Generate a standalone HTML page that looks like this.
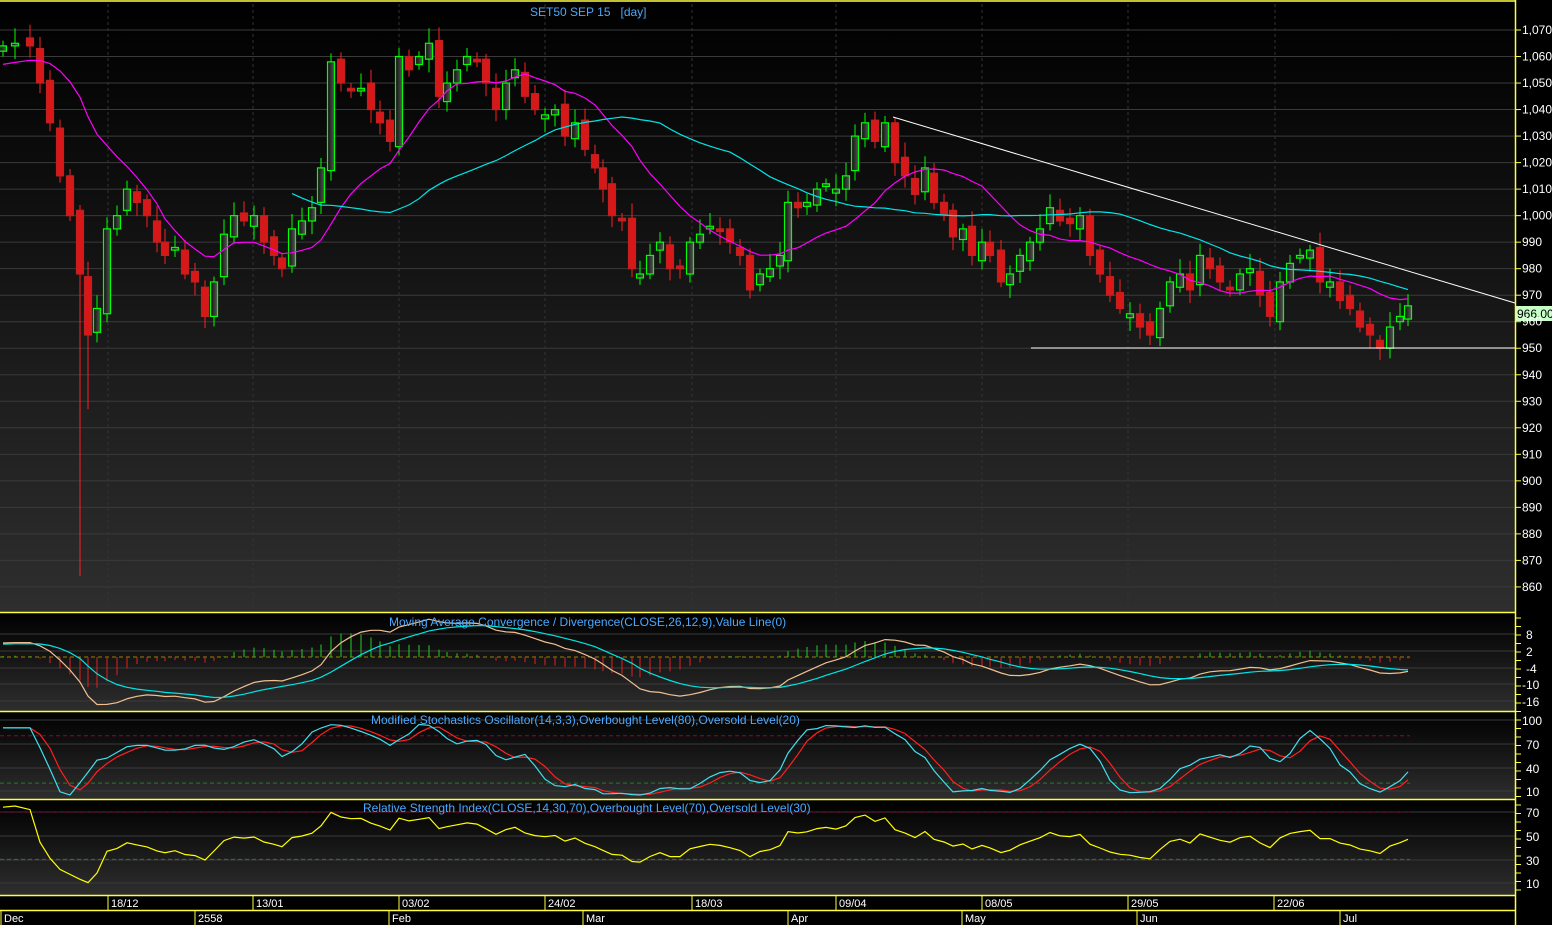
<!DOCTYPE html>
<html><head><meta charset="utf-8"><style>
html,body{margin:0;padding:0;background:#000;width:1552px;height:925px;overflow:hidden;font-family:"Liberation Sans",sans-serif}
svg{display:block}
</style></head><body>
<svg id="s" width="1552" height="925" xmlns="http://www.w3.org/2000/svg" font-family="Liberation Sans, sans-serif">
<defs>
<linearGradient id="g" x1="0" y1="0" x2="0" y2="1"><stop offset="0" stop-color="#000"/><stop offset="1" stop-color="#2e2e2e"/></linearGradient>
<linearGradient id="cg" x1="0" y1="0" x2="1" y2="0"><stop offset="0" stop-color="#111"/><stop offset="1" stop-color="#555"/></linearGradient>
</defs>
<rect x="0" y="0" width="1515" height="612" fill="url(#g)"/>
<rect x="0" y="613" width="1515" height="98" fill="url(#g)"/>
<rect x="0" y="712" width="1515" height="87" fill="url(#g)"/>
<rect x="0" y="800" width="1515" height="95" fill="url(#g)"/>
<g id="grid"></g>
<g id="plot"></g>
<g stroke="#ffff40" stroke-width="1.5" fill="none">
<line x1="0" y1="1" x2="1515" y2="1"/>
<line x1="0" y1="612.5" x2="1515" y2="612.5"/>
<line x1="0" y1="711.5" x2="1515" y2="711.5"/>
<line x1="0" y1="799.5" x2="1515" y2="799.5"/>
<line x1="0" y1="895.5" x2="1515" y2="895.5"/>
<line x1="0" y1="910.5" x2="1515" y2="910.5"/>
<line x1="1515.5" y1="0" x2="1515.5" y2="925"/>
</g>
<text x="530" y="16" fill="#4aa8ff" font-size="12" style="white-space:pre">SET50 SEP 15   [day]</text>
<text x="389" y="626" fill="#4aa8ff" font-size="12">Moving Average Convergence / Divergence(CLOSE,26,12,9),Value Line(0)</text>
<text x="371" y="724" fill="#4aa8ff" font-size="12">Modified Stochastics Oscillator(14,3,3),Overbought Level(80),Oversold Level(20)</text>
<text x="363" y="812" fill="#4aa8ff" font-size="12">Relative Strength Index(CLOSE,14,30,70),Overbought Level(70),Oversold Level(30)</text>
<g id="ax" fill="#fff" font-size="12"></g>
<g id="dt" fill="#fff" font-size="11"></g>
</svg>
<script>
var NS="http://www.w3.org/2000/svg";
function el(p,t,a,txt){var e=document.createElementNS(NS,t);for(var k in a)e.setAttribute(k,a[k]);if(txt!=null)e.textContent=txt;document.getElementById(p).appendChild(e);return e;}
var pts=[[3,1064],[15,1065],[30,1064],[40,1050],[50,1035],[60,1015],[70,1000],[80,978],[88,955],[97,965],[107,995],[117,1000],[127,1010],[137,1005],[147,1000],[157,990],[165,985],[175,988],[185,978],[195,975],[205,962],[214,975],[224,993],[234,1000],[244,998],[254,1000],[264,990],[274,985],[282,980],[292,995],[302,998],[312,1003],[321,1018],[331,1058],[341,1050],[351,1047],[361,1048],[371,1040],[380,1035],[390,1028],[399,1060],[409,1055],[419,1060],[429,1065],[439,1045],[447,1050],[457,1055],[467,1060],[477,1058],[486,1050],[496,1040],[506,1050],[515,1055],[525,1045],[535,1040],[545,1038],[555,1040],[565,1030],[575,1035],[585,1025],[595,1018],[603,1010],[612,1000],[622,998],[632,980],[640,978],[650,985],[660,990],[670,980],[680,980],[690,990],[700,993],[710,996],[720,994],[730,990],[740,985],[750,972],[760,978],[770,980],[780,985],[788,1005],[798,1003],[807,1005],[817,1010],[826,1012],[836,1010],[846,1015],[855,1030],[865,1035],[875,1028],[885,1035],[895,1020],[905,1015],[915,1008],[925,1018],[934,1005],[944,1000],[953,992],[963,995],[972,985],[982,990],[990,985],[1001,975],[1010,978],[1020,985],[1030,990],[1040,995],[1050,1003],[1060,998],[1070,997],[1080,1000],[1090,985],[1100,978],[1110,970],[1120,965],[1130,963],[1140,958],[1150,955],[1160,965],[1170,975],[1180,978],[1190,972],[1200,985],[1210,980],[1220,975],[1230,972],[1240,978],[1250,980],[1260,970],[1270,962],[1280,975],[1290,982],[1300,985],[1310,987],[1320,975],[1330,975],[1340,968],[1350,965],[1360,958],[1370,955],[1380,950],[1390,958],[1400,962],[1408,966]];
function py(p){return 30+(1070-p)*2.652;}
for(var p=860;p<=1070;p+=10){el("grid","line",{x1:0,x2:1515,y1:py(p),y2:py(p),stroke:"#3a3a3a"});
 el("ax","text",{x:1522,y:py(p)+4},p>=1000?("1,0"+String(p).slice(2)):String(p));
 el("ax","line",{x1:1516,x2:1521,y1:py(p),y2:py(p),stroke:"#ffff40"});}
[108,253,399,545,692,836,982,1128,1275].forEach(function(x){el("grid","line",{x1:x,x2:x,y1:4,y2:612,stroke:"#333","stroke-dasharray":"3,3"});});
[[634,"8"],[651,"2"],[668,"-4"],[684,"-10"],[701,"-16"],[720,"100"],[744,"70"],[768,"40"],[791,"10"],[812,"70"],[836,"50"],[860,"30"],[883,"10"]].forEach(function(a){el("ax","text",{x:a[1].length>2?1522:1526,y:a[0]+5},a[1]);el("grid","line",{x1:0,x2:1515,y1:a[0],y2:a[0],stroke:"#3a3a3a"});});
for(var y=618;y<895;y+=8.5)el("ax","line",{x1:1516,x2:1521,y1:y,y2:y,stroke:"#ffff40"});
var n=pts.length,O=[],H=[],L=[],C=[];
for(var i=0;i<n;i++){var c=pts[i][1],o=i?pts[i-1][1]+((i*7)%5-2):c-2;if(Math.abs(o-c)<1)o=c-1.5;
 var h=Math.max(o,c)+2+(i*13%7)*0.6,l=Math.min(o,c)-2-(i*11%6)*0.6;O.push(o);C.push(c);H.push(h);L.push(l);}
L[7]=864;L[8]=927;
for(var i=0;i<n;i++){var x=pts[i][0],up=C[i]>=O[i],col=up?"#00ff00":"#ff2020";
 el("plot","line",{x1:x,x2:x,y1:py(H[i]),y2:py(L[i]),stroke:col});
 var t=py(Math.max(O[i],C[i])),b=py(Math.min(O[i],C[i]));
 el("plot","rect",{x:x-3.5,y:t,width:7,height:Math.max(1.5,b-t),fill:up?"url(#cg)":"#d81818",stroke:up?"#00ff00":"#c02020","stroke-width":1.2});}
// padded history
var P=40,hist=[];for(var i=0;i<P;i++)hist.push(1030+i*0.8+Math.sin(i)*3);
var CX=hist.concat(C);
function ma(a,k){return a.map(function(v,i){var s=0,c=0;for(var j=Math.max(0,i-k+1);j<=i;j++){s+=a[j];c++;}return s/c;});}
function ema(a,k){var r=[],al=2/(k+1);a.forEach(function(v,i){r.push(i?r[i-1]+al*(v-r[i-1]):v);});return r;}
function cut(a){return a.slice(P);}
function line(par,arr,fy,col,start){var d="";for(var i=start||0;i<n;i++){if(arr[i]==null)continue;d+=(d?"L":"M")+pts[i][0]+","+fy(arr[i]).toFixed(1);}el(par,"path",{d:d,stroke:col,fill:"none","stroke-width":1.2});}
var m1=cut(ma(CX,14)),m2=cut(ma(CX,35));
line("plot",m1,py,"#ff00ff");line("plot",m2,py,"#00e5e5",29);
el("plot","line",{x1:893,y1:117,x2:1515,y2:303,stroke:"#fff"});
el("plot","line",{x1:1031,y1:348,x2:1515,y2:348,stroke:"#fff"});
el("plot","rect",{x:1515,y:306,width:37,height:15,fill:"#c8ffc8"});
el("plot","text",{x:1517,y:318,fill:"#000","font-size":12},"966.00");
var e12=ema(CX,12),e26=ema(CX,26),mcx=e12.map(function(v,i){return v-e26[i];}),sgx=ema(mcx,9);
var mc=cut(mcx),sg=cut(sgx);
function my(v){return 657-v*2.6;}
el("plot","line",{x1:0,x2:1410,y1:657,y2:657,stroke:"#a08000","stroke-dasharray":"4,3"});
for(var i=0;i<n;i++){var hv=(mc[i]-sg[i]);el("plot","line",{x1:pts[i][0],x2:pts[i][0],y1:657,y2:my(hv),stroke:hv>=0?"#20d020":"#e02020"});}
line("plot",mc,my,"#f0c090");line("plot",sg,my,"#00e5e5");
var K=[];for(var i=0;i<n;i++){var hh=-1e9,ll=1e9;for(var j=Math.max(0,i-13);j<=i;j++){hh=Math.max(hh,H[j]);ll=Math.min(ll,L[j]);}K.push(100*(C[i]-ll)/(hh-ll||1));}
K[0]=K[1]=K[2]=90;
var sk=ma(K,3),sd=ma(sk,3);
function sy(v){return 720+(100-Math.max(5,Math.min(98,v)))*0.789;}
el("plot","line",{x1:0,x2:1410,y1:sy(80),y2:sy(80),stroke:"#900040","stroke-dasharray":"4,3"});
el("plot","line",{x1:0,x2:1410,y1:sy(20),y2:sy(20),stroke:"#208020","stroke-dasharray":"4,3"});
line("plot",sd,sy,"#ff2020");line("plot",sk,sy,"#40e0f0");
var RX=[],ag=0.8,al2=0.8;for(var i=0;i<CX.length;i++){var d=i?CX[i]-CX[i-1]:0;ag=(ag*13+Math.max(d,0))/14;al2=(al2*13+Math.max(-d,0))/14;RX.push(100-100/(1+ag/(al2||0.01)));}
var R=cut(RX);
function ry(v){return 812+(70-v)*1.183;}
el("plot","line",{x1:0,x2:1410,y1:ry(70),y2:ry(70),stroke:"#900040","stroke-dasharray":"4,3"});
el("plot","line",{x1:0,x2:1410,y1:ry(30),y2:ry(30),stroke:"#208020","stroke-dasharray":"4,3"});
line("plot",R,ry,"#ffff00");
[[108,"18/12"],[253,"13/01"],[399,"03/02"],[545,"24/02"],[692,"18/03"],[836,"09/04"],[982,"08/05"],[1128,"29/05"],[1274,"22/06"]].forEach(function(a){el("dt","line",{x1:a[0],x2:a[0],y1:895,y2:910,stroke:"#ffff40"});el("dt","text",{x:a[0]+3,y:907},a[1]);});
[[1,"Dec"],[195,"2558"],[389,"Feb"],[583,"Mar"],[788,"Apr"],[962,"May"],[1137,"Jun"],[1340,"Jul"]].forEach(function(a){el("dt","line",{x1:a[0],x2:a[0],y1:910,y2:925,stroke:"#ffff40"});el("dt","text",{x:a[0]+3,y:922},a[1]);});
</script>
</body></html>
